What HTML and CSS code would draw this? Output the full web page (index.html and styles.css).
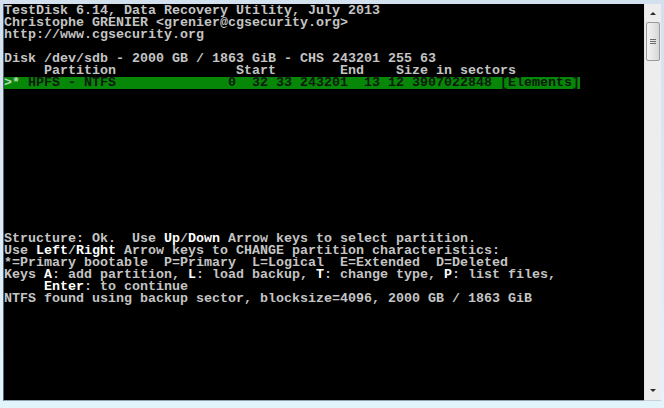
FILE: index.html
```html
<!DOCTYPE html>
<html lang="en">
<head>
    <meta charset="UTF-8">
    <title>TestDisk</title>
    <link rel="stylesheet" href="styles.css">
</head>
<body>
    <div class="window">
        <div class="console">
            <div class="line">TestDisk 6.14, Data Recovery Utility, July 2013</div>
            <div class="line">Christophe GRENIER &lt;grenier@cgsecurity.org&gt;</div>
            <div class="line">http://www.cgsecurity.org</div>
            <div class="line"></div>
            <div class="line">Disk /dev/sdb - 2000 GB / 1863 GiB - CHS 243201 255 63</div>
            <div class="line">     Partition               Start        End    Size in sectors</div>
            <div class="line"><span class="selected"><span class="cursor">&gt;*</span> HPFS - NTFS              0  32 33 243201  13 12 3907022848 [Elements]</span></div>
            <div class="spacer"></div>
            <div class="line">Structure: Ok.  Use <b>Up</b>/<b>Down</b> Arrow keys to select partition.</div>
            <div class="line">Use <b>Left</b>/<b>Right</b> Arrow keys to CHANGE partition characteristics:</div>
            <div class="line">*=Primary bootable  P=Primary  L=Logical  E=Extended  D=Deleted</div>
            <div class="line">Keys <b>A</b>: add partition, <b>L</b>: load backup, <b>T</b>: change type, <b>P</b>: list files,</div>
            <div class="line">     <b>Enter</b>: to continue</div>
            <div class="line">NTFS found using backup sector, blocksize=4096, 2000 GB / 1863 GiB</div>
        </div>
        <div class="scrollbar">
            <div class="arrow arrow-up"></div>
            <div class="thumb">
                <span class="grip"></span>
                <span class="grip"></span>
                <span class="grip"></span>
            </div>
            <div class="track"></div>
            <div class="arrow arrow-down"></div>
        </div>
    </div>
</body>
</html>
```

FILE: styles.css
```css
* {
    margin: 0;
    padding: 0;
    box-sizing: border-box;
}

body {
    width: 664px;
    height: 408px;
    overflow: hidden;
    background: linear-gradient(180deg, #d3e1ee 0%, #dcebf6 60%, #e2f5fb 100%);
}

.window {
    display: flex;
    height: 408px;
    padding: 4px 3px 7px 3px;
}

.console {
    flex: 1;
    background: #000;
    border-left: 1px solid #5a6570;
    border-bottom: 1px solid #8fa4b0;
    padding: 1px 0 0 0;
    font-family: "Liberation Mono", "DejaVu Sans Mono", monospace;
    font-size: 13.33px;
    font-weight: bold;
    line-height: 12px;
    color: #c4c4c4;
    overflow: hidden;
}

.line {
    height: 12px;
    white-space: pre;
}

.console b {
    color: #ffffff;
}

.selected {
    display: inline-block;
    height: 12px;
    background: #078707;
    color: #0c1a0c;
}

.cursor {
    color: #b8d8b8;
}

.spacer {
    height: 144px;
}

.scrollbar {
    width: 17px;
    background: #ededed;
    border-left: 1px solid #e2e2e2;
    border-bottom: 1px solid #c8d0d4;
    display: flex;
    flex-direction: column;
    align-items: center;
}

.arrow {
    height: 17px;
    width: 100%;
    position: relative;
}

.arrow::after {
    content: "";
    position: absolute;
    left: 5px;
    width: 0;
    height: 0;
    border-left: 3px solid transparent;
    border-right: 3px solid transparent;
}

.arrow-up::after {
    top: 8px;
    border-bottom: 3px solid #2a2a2a;
}

.arrow-down::after {
    top: 6px;
    border-top: 3px solid #2a2a2a;
}

.thumb {
    width: 14px;
    height: 39px;
    margin-top: 1px;
    border: 1px solid #9a9a9a;
    border-radius: 2px;
    background: linear-gradient(90deg, #f4f4f4 0%, #e6e6e6 50%, #d6d6d6 100%);
    display: flex;
    flex-direction: column;
    align-items: center;
    justify-content: center;
    gap: 1px;
}

.grip {
    width: 6px;
    height: 1px;
    background: #6a6a6a;
}

.track {
    flex: 1;
}
```
